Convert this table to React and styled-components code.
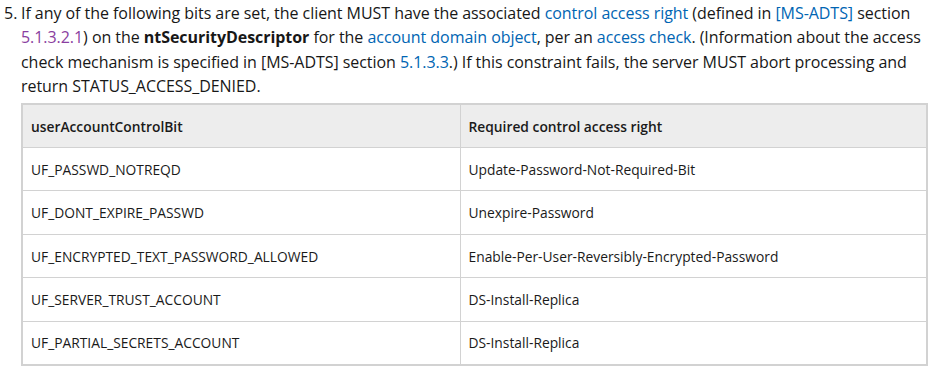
import React from "react";
import styled, { createGlobalStyle } from "styled-components";

const GlobalStyle = createGlobalStyle`
  html, body {
    margin: 0;
    padding: 0;
    background: #ffffff;
  }
  body {
    font-family: "Open Sans", "Noto Sans", "Liberation Sans", sans-serif;
    color: #171717;
  }
`;

const Page = styled.div`
  width: 940px;
  height: 371px;
  overflow: hidden;
  background: #ffffff;
`;

const Item = styled.div`
  display: flex;
  padding: 1px 0 0 4px;
`;

const Marker = styled.span`
  flex: 0 0 17px;
  font-size: 16px;
  line-height: 24.3px;
`;

const Body = styled.div`
  flex: 1;
  display: flex;
  flex-direction: column;
`;

const Para = styled.p`
  margin: 0;
  font-size: 16px;
  line-height: 24.3px;
  letter-spacing: -0.05px;
  white-space: nowrap;
`;

const Link = styled.a`
  color: ${({ $visited }) => ($visited ? "#8a3ea0" : "#0065b3")};
  text-decoration: none;
`;

const Strong = styled.b`
  font-weight: 700;
`;

const Table = styled.table`
  margin-top: 5px;
  width: 907px;
  border-collapse: collapse;
  border: 2px solid #d2d2d2;
  font-size: 13.8px;
  table-layout: fixed;
`;

const Th = styled.th`
  background: #ededed;
  text-align: left;
  font-weight: 600;
  height: 43.4px;
  padding: 0 8px;
  border: 1px solid #d2d2d2;
  color: #1a1a1a;
  box-sizing: border-box;
`;

const Td = styled.td`
  height: 43.4px;
  padding: 0 8px;
  border: 1px solid #d2d2d2;
  color: #1a1a1a;
  box-sizing: border-box;
`;

const rows = [
  ["UF_PASSWD_NOTREQD", "Update-Password-Not-Required-Bit"],
  ["UF_DONT_EXPIRE_PASSWD", "Unexpire-Password"],
  ["UF_ENCRYPTED_TEXT_PASSWORD_ALLOWED", "Enable-Per-User-Reversibly-Encrypted-Password"],
  ["UF_SERVER_TRUST_ACCOUNT", "DS-Install-Replica"],
  ["UF_PARTIAL_SECRETS_ACCOUNT", "DS-Install-Replica"],
];

export default function App() {
  return (
    <Page>
      <GlobalStyle />
      <Item>
        <Marker>5.</Marker>
        <Body>
          <Para>
            If any of the following bits are set, the client MUST have the associated{" "}
            <Link href="#">control access right</Link> (defined in{" "}
            <Link href="#">[MS-ADTS]</Link> section
          </Para>
          <Para>
            <Link href="#" $visited>5.1.3.2.1</Link>) on the <Strong>ntSecurityDescriptor</Strong> for the{" "}
            <Link href="#">account domain object</Link>, per an <Link href="#">access check</Link>. (Information about the access
          </Para>
          <Para>
            check mechanism is specified in [MS-ADTS] section <Link href="#">5.1.3.3</Link>.) If this constraint fails, the server MUST abort processing and
          </Para>
          <Para>return STATUS_ACCESS_DENIED.</Para>
          <Table>
            <colgroup>
              <col style={{ width: "438px" }} />
              <col />
            </colgroup>
            <thead>
              <tr>
                <Th>userAccountControlBit</Th>
                <Th>Required control access right</Th>
              </tr>
            </thead>
            <tbody>
              {rows.map(([bit, right]) => (
                <tr key={bit + right}>
                  <Td>{bit}</Td>
                  <Td>{right}</Td>
                </tr>
              ))}
            </tbody>
          </Table>
        </Body>
      </Item>
    </Page>
  );
}
